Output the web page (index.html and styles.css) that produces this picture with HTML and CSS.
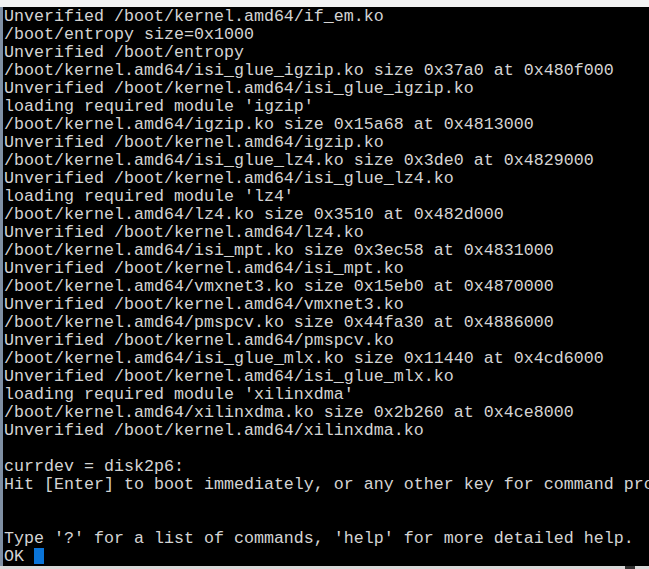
FILE: index.html
```html
<!DOCTYPE html>
<html>
<head>
<meta charset="utf-8">
<link rel="stylesheet" href="styles.css">
</head>
<body>
<div class="window">
  <div class="titlebar"></div>
  <div class="main">
    <div class="edge"></div>
    <div class="console"><div class="line">Unverified /boot/kernel.amd64/if_em.ko</div><div class="line">/boot/entropy size=0x1000</div><div class="line">Unverified /boot/entropy</div><div class="line">/boot/kernel.amd64/isi_glue_igzip.ko size 0x37a0 at 0x480f000</div><div class="line">Unverified /boot/kernel.amd64/isi_glue_igzip.ko</div><div class="line">loading required module 'igzip'</div><div class="line">/boot/kernel.amd64/igzip.ko size 0x15a68 at 0x4813000</div><div class="line">Unverified /boot/kernel.amd64/igzip.ko</div><div class="line">/boot/kernel.amd64/isi_glue_lz4.ko size 0x3de0 at 0x4829000</div><div class="line">Unverified /boot/kernel.amd64/isi_glue_lz4.ko</div><div class="line">loading required module 'lz4'</div><div class="line">/boot/kernel.amd64/lz4.ko size 0x3510 at 0x482d000</div><div class="line">Unverified /boot/kernel.amd64/lz4.ko</div><div class="line">/boot/kernel.amd64/isi_mpt.ko size 0x3ec58 at 0x4831000</div><div class="line">Unverified /boot/kernel.amd64/isi_mpt.ko</div><div class="line">/boot/kernel.amd64/vmxnet3.ko size 0x15eb0 at 0x4870000</div><div class="line">Unverified /boot/kernel.amd64/vmxnet3.ko</div><div class="line">/boot/kernel.amd64/pmspcv.ko size 0x44fa30 at 0x4886000</div><div class="line">Unverified /boot/kernel.amd64/pmspcv.ko</div><div class="line">/boot/kernel.amd64/isi_glue_mlx.ko size 0x11440 at 0x4cd6000</div><div class="line">Unverified /boot/kernel.amd64/isi_glue_mlx.ko</div><div class="line">loading required module 'xilinxdma'</div><div class="line">/boot/kernel.amd64/xilinxdma.ko size 0x2b260 at 0x4ce8000</div><div class="line">Unverified /boot/kernel.amd64/xilinxdma.ko</div><div class="line"> </div><div class="line">currdev = disk2p6:</div><div class="line">Hit [Enter] to boot immediately, or any other key for command prompt.</div><div class="line"> </div><div class="line"> </div><div class="line">Type '?' for a list of commands, 'help' for more detailed help.</div><div class="line">OK <span class="cursor"></span></div></div>
  </div>
  <div class="statusbar"><span class="thumb"></span></div>
</div>
</body>
</html>
```
FILE: styles.css
```css
html, body {
  margin: 0;
  padding: 0;
  background: #f0f0f0;
  overflow: hidden;
}
.window {
  width: 649px;
  height: 569px;
  display: flex;
  flex-direction: column;
  overflow: hidden;
}
.titlebar {
  height: 7px;
  background: #f2f2f2;
  flex: none;
}
.main {
  display: flex;
  flex: 1;
  min-height: 0;
}
.edge {
  width: 3px;
  background: #7f8fa3;
  flex: none;
}
.console {
  flex: 1;
  background: #000;
  color: #d4d4d4;
  font-family: "Liberation Mono", "Courier New", monospace;
  font-size: 16.67px;
  line-height: 18px;
  padding-left: 1px;
  padding-top: 1px;
  overflow: hidden;
}
.line {
  white-space: pre;
  height: 18px;
}
.cursor {
  display: inline-block;
  width: 10px;
  height: 16px;
  background: #0a74d8;
  vertical-align: -3px;
}
.statusbar {
  height: 3px;
  background: #d9d9d9;
  flex: none;
  display: flex;
  justify-content: flex-end;
  padding-right: 14px;
}
.thumb {
  width: 10px;
  height: 3px;
  background: #333;
}
```
